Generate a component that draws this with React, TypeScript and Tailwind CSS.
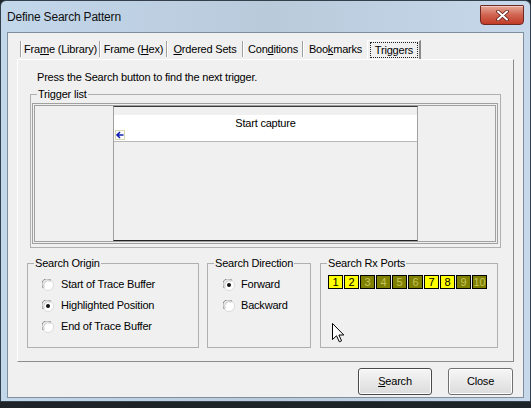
import * as React from "react";

const ports = [1, 2, 3, 4, 5, 6, 7, 8, 9, 10];
const lit = [1, 2, 7, 8];

function Radio({ checked }: { checked?: boolean }) {
  return (
    <svg width="12" height="12" viewBox="0 0 12 12" className="shrink-0">
      <circle cx="6" cy="6" r="5.5" fill="#ffffff" stroke="#dadada" />
      <path d="M1.3 9.1 A5.5 5.5 0 0 1 9.1 1.3" fill="none" stroke="#8a8a8a" />
      <path d="M2.3 8.3 A4.4 4.4 0 0 1 8.3 2.3" fill="none" stroke="#c4c4c4" />
      {checked && <circle cx="6" cy="6" r="2" fill="#111111" />}
    </svg>
  );
}

function Group({ title, className, children }: { title: string; className: string; children?: React.ReactNode }) {
  return (
    <fieldset className={`border border-[#b0b0b0] ${className}`}>
      <legend className="ml-[6px] px-[1px] leading-[13px]">{title}</legend>
      {children}
    </fieldset>
  );
}

function Sep() {
  return <div className="mt-[1px] h-[16px] w-[2px] border-l border-[#a0a0a0] bg-white" />;
}

function Tab({ w, children }: { w: string; children: React.ReactNode }) {
  return <div className={`${w} flex h-[19px] items-center justify-center`}>{children}</div>;
}

export default function App() {
  return (
    <div className="relative h-[408px] w-[531px] overflow-hidden bg-[#1d2327] font-['Liberation_Sans',Arial,sans-serif] text-[11px] tracking-[-0.2px] text-black">
      <div className="flex h-[402px] w-[531px] flex-col rounded-t-[6px] border border-[#34414d] bg-gradient-to-r from-[#c3d7eb] via-[#b9cadb] to-[#c6d8ea]">
        {/* title bar */}
        <div className="flex h-[31px] items-start justify-between">
          <span className="ml-[6px] mt-[9px] text-[12px] leading-[14px] text-[#111]">Define Search Pattern</span>
          <div className="mr-[6px] mt-[4px] flex h-[20px] w-[44px] items-center justify-center rounded-b-[4px] rounded-t-[1px] border border-[#6e2a22] bg-gradient-to-b from-[#e6a899] via-[#d06350] to-[#c23b26] shadow-[inset_0_1px_0_#f3c9bf]">
            <svg width="13" height="11" viewBox="0 0 13 11">
              <path d="M2 1.5 L11 9.5 M11 1.5 L2 9.5" stroke="#5b1d16" strokeWidth="3.6" strokeLinecap="round" />
              <path d="M2 1.5 L11 9.5 M11 1.5 L2 9.5" stroke="#ffffff" strokeWidth="2" strokeLinecap="round" />
            </svg>
          </div>
        </div>

        <div className="flex flex-1">
          <div className="w-[6px]" />
          {/* client area */}
          <div className="flex h-[366px] w-[517px] flex-col border border-[#7f8f9e] bg-[#f0f0f0]">
            {/* tabs */}
            <div className="ml-[12px] mt-[7px] flex h-[19px]">
              <Sep />
              <Tab w="w-[77px]">
                <span>
                  Fra<u>m</u>e (Library)
                </span>
              </Tab>
              <Sep />
              <Tab w="w-[65px]">
                <span>
                  Frame (<u>H</u>ex)
                </span>
              </Tab>
              <Sep />
              <Tab w="w-[74px]">
                <span>
                  <u>O</u>rdered Sets
                </span>
              </Tab>
              <Sep />
              <Tab w="w-[58px]">
                <span>
                  Con<u>d</u>itions
                </span>
              </Tab>
              <Sep />
              <Tab w="w-[63px]">
                <span>
                  Boo<u>k</u>marks
                </span>
              </Tab>
              <div className="flex h-[19px] w-[54px] border-l border-t border-r-2 border-l-white border-t-white border-r-[#8a8a8a] pb-[1px] pl-[2px] pr-[1px] pt-[1px]">
                <div className="flex flex-1 items-center justify-center border border-dotted border-[#222]">
                  <span>
                    Tri<u>g</u>gers
                  </span>
                </div>
              </div>
            </div>

            {/* tab panel */}
            <div className="ml-[9px] flex h-[303px] w-[497px] flex-col border border-b-[#8c8c8c] border-l-white border-r-[#8c8c8c] border-t-white">
              <p className="ml-[19px] mt-[11px] leading-[13px]">Press the Search button to find the next trigger.</p>

              <Group title="Trigger list" className="ml-[12px] mt-[4px] h-[160px] w-[471px]">
                <div className="ml-[1px] mt-[2px] h-[141px] w-[466px] border border-[#a0a0a0] p-[1px]">
                  <div className="flex h-full border border-[#a0a0a0]">
                    <div className="w-[78px]" />
                    <div className="flex w-[305px] flex-col border-x border-b border-t border-b-[#222] border-l-[#a0a0a0] border-r-[#a0a0a0] border-t-[#3a3a3a]">
                      <div className="h-[8px]" />
                      <div className="flex h-[27px] flex-col border-b border-[#b8b8b8] bg-white">
                        <div className="pt-[2px] text-center leading-[13px]">Start capture</div>
                        <svg width="10" height="10" viewBox="0 0 10 10" className="ml-[1px]">
                          <rect x="0.5" y="0.5" width="9" height="9" fill="#ffffff" stroke="#d8d8b0" />
                          <path d="M5 2 L2 5 L5 8 M2 5 L8.5 5" fill="none" stroke="#1020b0" strokeWidth="1.6" />
                        </svg>
                      </div>
                    </div>
                    <div className="flex-1" />
                  </div>
                </div>
              </Group>

              {/* bottom groups */}
              <div className="ml-[9px] mt-[9px] flex h-[91px]">
                <Group title="Search Origin" className="h-[91px] w-[172px]">
                  <div className="mt-[4px] flex flex-col">
                    {[
                      ["Start of Trace Buffer", false],
                      ["Highlighted Position", true],
                      ["End of Trace Buffer", false],
                    ].map(([label, on]) => (
                      <div key={label as string} className="flex h-[21px] items-center pl-[14px]">
                        <Radio checked={on as boolean} />
                        <span className="ml-[7px]">{label as string}</span>
                      </div>
                    ))}
                  </div>
                </Group>

                <Group title="Search Direction" className="ml-[8px] h-[91px] w-[104px]">
                  <div className="mt-[4px] flex flex-col">
                    <div className="flex h-[21px] items-center pl-[15px]">
                      <Radio checked />
                      <span className="ml-[6px]">Forward</span>
                    </div>
                    <div className="flex h-[21px] items-center pl-[15px]">
                      <Radio />
                      <span className="ml-[6px]">Backward</span>
                    </div>
                  </div>
                </Group>

                <Group title="Search Rx Ports" className="ml-[9px] h-[91px] w-[178px]">
                  <div className="ml-[7px] mt-[5px] flex gap-[1px]">
                    {ports.map((n) => (
                      <div
                        key={n}
                        className={
                          lit.includes(n)
                            ? "flex h-[14px] w-[15px] items-center justify-center border border-black bg-[#ffff00] leading-none text-black"
                            : "flex h-[14px] w-[15px] items-center justify-center border border-black bg-[#808000] leading-none text-[#c2c25e]"
                        }
                      >
                        {n}
                      </div>
                    ))}
                  </div>
                </Group>
              </div>
            </div>

            {/* buttons */}
            <div className="ml-[350px] mt-[6px] flex gap-[16px]">
              <button className="flex h-[27px] w-[74px] items-center justify-center rounded-[3px] border border-[#4a4a4a] bg-gradient-to-b from-[#f6f6f6] to-[#dcdcdc] shadow-[inset_0_0_0_1px_#ffffff]">
                <span>
                  <u>S</u>earch
                </span>
              </button>
              <button className="flex h-[27px] w-[65px] items-center justify-center rounded-[3px] border border-[#707070] bg-gradient-to-b from-[#f6f6f6] to-[#dcdcdc] shadow-[inset_0_0_0_1px_#ffffff]">
                Close
              </button>
            </div>
          </div>
          <div className="w-[6px]" />
        </div>
        <div className="h-[3px]" />
      </div>

      {/* mouse pointer */}
      <svg width="13" height="20" viewBox="0 0 13 20" className="absolute left-[332px] top-[323px]">
        <path d="M0.5 0.5 L0.5 16.5 L4.5 12.8 L7.3 18.8 L9.6 17.8 L6.9 12 L11.8 12 Z" fill="#ffffff" stroke="#000000" strokeWidth="1" strokeLinejoin="round" />
      </svg>
    </div>
  );
}
